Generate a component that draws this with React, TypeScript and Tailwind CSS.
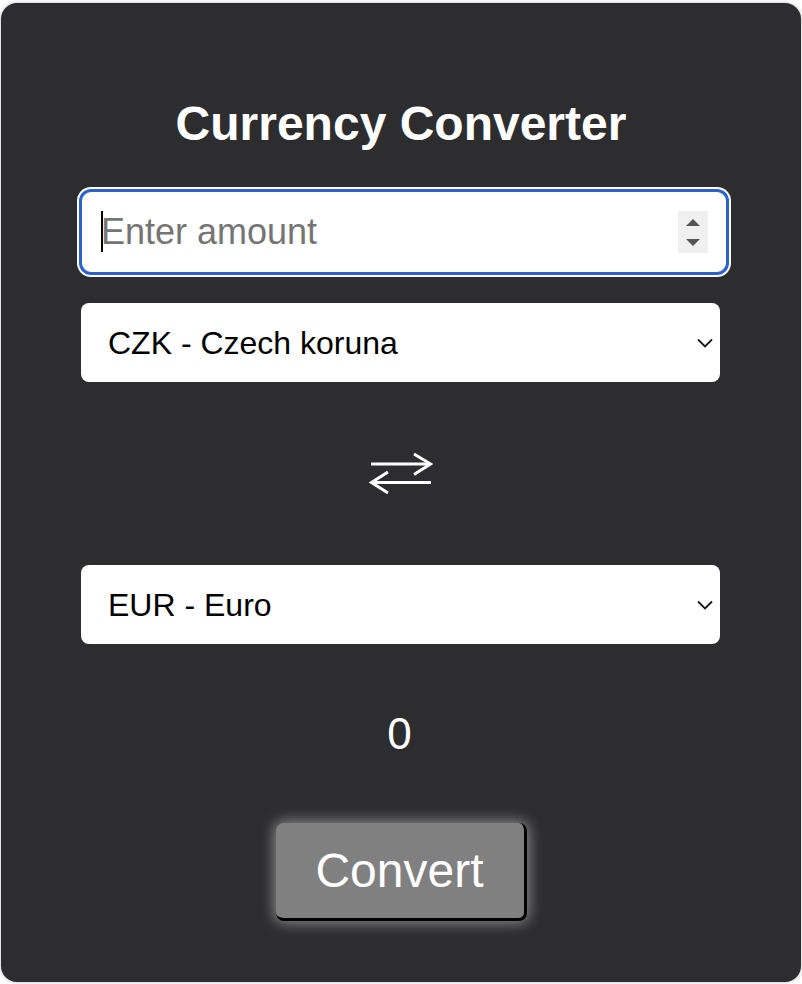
import { useState } from "react"

const currencies = [
  { code: "CZK", name: "Czech koruna" },
  { code: "EUR", name: "Euro" },
  { code: "USD", name: "US dollar" },
  { code: "GBP", name: "British pound" },
]

function Chevron() {
  return (
    <svg
      className="pointer-events-none absolute right-[7px] top-[35px]"
      width="16"
      height="10"
      viewBox="0 0 16 10"
      fill="none"
    >
      <polyline points="1,1.5 8,8.5 15,1.5" stroke="#1a1a1a" strokeWidth="1.8" />
    </svg>
  )
}

function CurrencySelect({ value, onChange }: { value: string; onChange: (v: string) => void }) {
  return (
    <div className="relative ml-[80px] h-[79px] w-[639px] rounded-[8px] bg-white">
      <select
        value={value}
        onChange={(e) => onChange(e.target.value)}
        className="h-full w-full appearance-none bg-transparent pl-[27px] text-[32px] text-black outline-none"
      >
        {currencies.map((c) => (
          <option key={c.code} value={c.code}>
            {c.code} - {c.name}
          </option>
        ))}
      </select>
      <Chevron />
    </div>
  )
}

export default function App() {
  const [amount, setAmount] = useState("")
  const [from, setFrom] = useState("CZK")
  const [to, setTo] = useState("EUR")
  const [result, setResult] = useState(0)

  const swap = () => {
    setFrom(to)
    setTo(from)
  }

  return (
    <div className="min-h-screen bg-white pl-[1px] pt-[3px] font-['Liberation_Sans',Arial,sans-serif]">
      <div className="flex w-[800px] flex-col rounded-[16px] bg-[#2d2d2f] pb-[61px] pt-[93px] shadow-[0_0_4px_rgba(0,0,0,0.25)]">
        <h1 className="text-center text-[48px] font-bold leading-[56px] text-white">
          Currency Converter
        </h1>

        <div className="ml-[78px] mt-[37px] flex h-[86px] w-[650px] items-center rounded-[12px] border-[3px] border-[#2c62cf] bg-white pl-[19px] pr-[18px] ring-2 ring-white">
          <div className="relative flex-1">
            <span className="absolute left-0 top-[-1px] h-[41px] w-[2px] bg-black" />
            <input
              type="number"
              value={amount}
              onChange={(e) => setAmount(e.target.value)}
              placeholder="Enter amount"
              className="w-full bg-transparent text-[36px] leading-[40px] text-black outline-none [appearance:textfield] placeholder:text-[#757575] [&::-webkit-inner-spin-button]:appearance-none"
            />
          </div>
          <svg width="30" height="42" viewBox="0 0 30 42" className="shrink-0">
            <rect width="30" height="42" fill="#f0f0f0" />
            <polygon points="15,8 22,15 8,15" fill="#555" />
            <polygon points="8,28 22,28 15,35" fill="#555" />
          </svg>
        </div>

        <div className="mt-[28px]">
          <CurrencySelect value={from} onChange={setFrom} />
        </div>

        <div className="flex h-[183px] items-center justify-center pt-[3px]">
          <button onClick={swap} className="block">
            <svg width="80" height="50" viewBox="0 0 80 50" fill="none">
              <g stroke="#fff" strokeWidth="3">
                <line x1="10" y1="14" x2="69" y2="14" />
                <polyline points="53,4 69.5,14 53,24.5" />
                <line x1="11" y1="32.5" x2="70" y2="32.5" />
                <polyline points="27,22 10.5,32.5 27,43" />
              </g>
            </svg>
          </button>
        </div>

        <CurrencySelect value={to} onChange={setTo} />

        <div className="flex h-[179px] items-center justify-center pr-[3px] text-[44px] text-white">
          {result}
        </div>

        <button
          onClick={() => setResult(Number(amount) || 0)}
          className="mx-auto h-[98px] w-[251px] rounded-[8px] border-b-[3px] border-r-[3px] border-black bg-[#808080] text-[48px] text-white shadow-[0_0_14px_2px_rgba(255,255,255,0.45)]"
        >
          Convert
        </button>
      </div>
    </div>
  )
}
